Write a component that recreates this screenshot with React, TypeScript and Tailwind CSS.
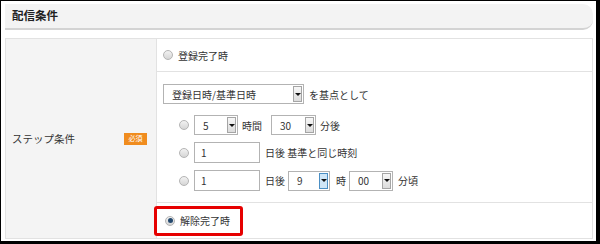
import React from "react";

const font = { fontFamily: '"Noto Sans CJK JP", "Noto Sans", sans-serif' };

function Radio({ checked = false }: { checked?: boolean }) {
  return (
    <span className="flex h-[10px] w-[10px] shrink-0 items-center justify-center rounded-full border border-[#b4b4b4] bg-gradient-to-b from-[#f2f2f2] to-[#d6d6d6]">
      {checked && <span className="h-[5px] w-[5px] rounded-full bg-[#24496e]" />}
    </span>
  );
}

function Select({ value, width, active = false }: { value: string; width: string; active?: boolean }) {
  return (
    <div className={`flex h-[20px] items-stretch border border-[#b3b3b3] bg-white ${width}`}>
      <span className="flex flex-1 items-center pl-[8px]">{value}</span>
      <span
        className={`m-[1px] flex w-[9px] items-center justify-center border ${
          active ? "border-[#4b8fc4] bg-[#cfe6f7]" : "border-[#a5a5a5] bg-gradient-to-b from-[#f7f7f7] to-[#dcdcdc]"
        }`}
      >
        <span className="h-0 w-0 border-x-[3px] border-t-[3px] border-x-transparent border-t-[#111]" />
      </span>
    </div>
  );
}

function Input({ value }: { value: string }) {
  return (
    <div className="flex h-[21px] w-[66px] items-center border border-[#b3b3b3] bg-white pl-[6px]">{value}</div>
  );
}

export default function App() {
  return (
    <div
      style={font}
      className="h-[244px] w-[600px] border-b-[3px] border-l border-r-[4px] border-t border-black bg-white pl-[4px] pr-[3px] pt-[3px] text-[10px] text-[#333]"
    >
      {/* header */}
      <div className="flex h-[26px] items-center rounded-r-[10px] border-b-2 border-[#d3d3d3] bg-[#f3f3f3] pl-[7px] text-[11.5px] font-bold text-[#222]">
        配信条件
      </div>

      {/* table */}
      <div className="mt-[8px] flex h-[201px] border border-[#e2e2e2]">
        <div className="flex w-[151px] items-center justify-between border-r border-[#e2e2e2] bg-[#f4f4f4] pl-[6px] pr-[9px]">
          <span className="text-[10.5px]">ステップ条件</span>
          <span className="flex h-[12px] w-[23px] items-center justify-center bg-[#f08c1e] text-[7px] text-white">
            必須
          </span>
        </div>

        <div className="flex flex-1 flex-col">
          <div className="flex h-[33px] items-center gap-[5px] border-b border-[#e2e2e2] pl-[6px]">
            <Radio />
            <span>登録完了時</span>
          </div>

          <div className="flex h-[131px] flex-col border-b border-[#e2e2e2] pl-[6px] pt-[12px]">
            <div className="flex items-center gap-[5px]">
              <Select value="登録日時/基準日時" width="w-[141px]" />
              <span>を基点として</span>
            </div>

            <div className="mt-[11px] flex flex-col gap-[7px] pl-[16px]">
              <div className="flex h-[20px] items-center">
                <Radio />
                <span className="ml-[5px]"><Select value="5" width="w-[44px]" /></span>
                <span className="ml-[4px] mr-[9px]">時間</span>
                <Select value="30" width="w-[45px]" />
                <span className="ml-[4px]">分後</span>
              </div>
              <div className="flex h-[21px] items-center gap-[5px]">
                <Radio />
                <Input value="1" />
                <span>日後 基準と同じ時刻</span>
              </div>
              <div className="flex h-[21px] items-center">
                <Radio />
                <span className="ml-[5px]"><Input value="1" /></span>
                <span className="ml-[5px] mr-[3px]">日後</span>
                <Select value="9" width="w-[42px]" active />
                <span className="ml-[6px] mr-[3px]">時</span>
                <Select value="00" width="w-[44px]" />
                <span className="ml-[5px]">分頃</span>
              </div>
            </div>
          </div>

          <div className="flex flex-1 items-center">
            <div className="ml-[-3px] flex h-[30px] items-center gap-[5px] rounded-[3px] border-[3px] border-[#e60000] pl-[8px] pr-[10px]">
              <Radio checked />
              <span>解除完了時</span>
            </div>
          </div>
        </div>
      </div>
    </div>
  );
}
